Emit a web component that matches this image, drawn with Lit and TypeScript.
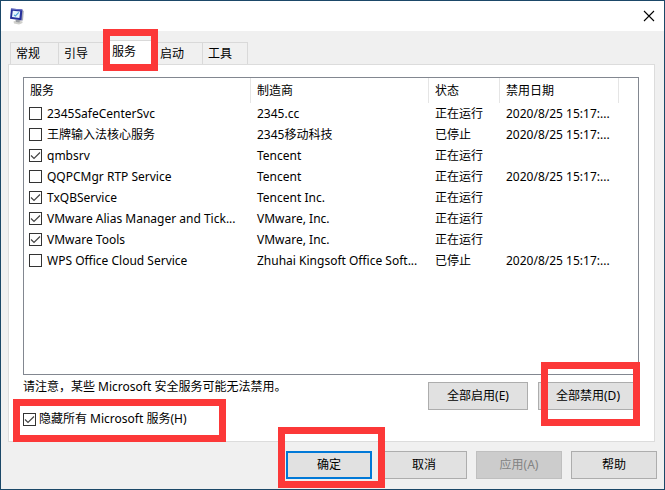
import { LitElement, html, css, nothing, svg } from "lit";
import { customElement, property, state } from "lit/decorators.js";
import { classMap } from "lit/directives/class-map.js";

interface Service {
  name: string;
  vendor: string;
  running: boolean;
  disabledOn?: string;
  enabled: boolean;
}

const DATE = "2020/8/25 15:17:...";

const SERVICES: Service[] = [
  { name: "2345SafeCenterSvc", vendor: "2345.cc", running: true, disabledOn: DATE, enabled: false },
  { name: "王牌输入法核心服务", vendor: "2345移动科技", running: false, disabledOn: DATE, enabled: false },
  { name: "qmbsrv", vendor: "Tencent", running: true, enabled: true },
  { name: "QQPCMgr RTP Service", vendor: "Tencent", running: true, disabledOn: DATE, enabled: false },
  { name: "TxQBService", vendor: "Tencent Inc.", running: true, enabled: true },
  { name: "VMware Alias Manager and Tick...", vendor: "VMware, Inc.", running: true, enabled: true },
  { name: "VMware Tools", vendor: "VMware, Inc.", running: true, enabled: true },
  { name: "WPS Office Cloud Service", vendor: "Zhuhai Kingsoft Office Soft...", running: false, disabledOn: DATE, enabled: false },
];

const TABS = ["常规", "引导", "服务", "启动", "工具"];

// Tick box with the flat Windows 10 look, drawn over a real input.
@customElement("check-box")
class CheckBox extends LitElement {
  @property({ type: Boolean }) checked = false;
  @property() label = "";
  @property({ type: Boolean }) tight = false;

  static styles = css`
    :host { display: block; }
    .label { display: flex; align-items: center; gap: 5px; }
    .tight { gap: 3px; }
    .box { display: grid; flex: none; width: 13px; height: 13px; }
    .input, .tick { grid-area: 1 / 1; }
    .input {
      appearance: none;
      box-sizing: border-box;
      width: 13px;
      height: 13px;
      margin: 0;
      border: 1px solid #333;
      background: #fff;
    }
    .tick { display: none; pointer-events: none; }
    .input:checked + .tick { display: block; }
    .text { white-space: nowrap; }
  `;

  render() {
    return html`<label class=${classMap({ label: true, tight: this.tight })}>
      <span class="box">
        <input class="input" type="checkbox" .checked=${this.checked} />
        <svg class="tick" width="13" height="13" viewBox="0 0 13 13" aria-hidden="true">
          <path d="M2 6.5 L5 9.5 L11 3.5" fill="none" stroke="#444" stroke-width="1.2" />
        </svg>
      </span>
      <span class="text">${this.label}</span>
    </label>`;
  }
}

const monitorIcon = svg`
  <path d="M3.5 13.5 L7 12 L12.5 13.5 L12.5 15 L9 16.5 L4 15.5 Z" fill="#d0d0cc" />
  <path d="M5.5 11.5 L10 12 L9.5 14.5 L6 14 Z" fill="#9a9da2" />
  <path d="M11.5 1.8 L13.8 3 L13 12.4 L10 12.8 Z" fill="#a9abb8" />
  <path d="M1 0.6 L12.4 1.6 L11.4 12.2 L0 10.8 Z" fill="#26309c" />
  <path d="M1 0.6 L12.4 1.6 L12.3 2.6 L1 1.6 Z" fill="#6a72c5" />
  <path d="M2.8 2.8 L10.2 3.5 L9.4 10 L2 9.1 Z" fill="#e6f5fd" />
  <path d="M4 6.8 L5.4 8 L8.8 4.4" fill="none" stroke="#4aa0d8" stroke-width="1.1" />
`;

@customElement("app-root")
class AppRoot extends LitElement {
  @state() private active = 2;

  static styles = css`
    :host {
      display: block;
      font: 12px/20px "Noto Sans", "Noto Sans CJK SC", sans-serif;
      color: #000;
    }
    .window {
      box-sizing: border-box;
      display: flex;
      flex-direction: column;
      min-height: 100vh;
      border: 1px solid #1b4868;
      background: #f0f0f0;
    }
    .titlebar {
      display: flex;
      justify-content: space-between;
      align-items: center;
      height: 30px;
      padding: 0 9px;
      background: #fff;
    }
    .icon { display: block; }
    .close { padding: 0; border: 0; background: none; }

    .body {
      display: flex;
      flex: 1;
      flex-direction: column;
      padding: 9px 9px 0 7px;
    }
    .tabs {
      display: grid;
      grid-template-columns: repeat(4, 48px) 46px;
      align-items: end;
      padding-left: 2px;
    }
    .tab {
      box-sizing: border-box;
      display: block;
      width: 100%;
      height: 22px;
      padding: 0 0 0 5px;
      border: 1px solid #d9d9d9;
      border-width: 1px 0 0 1px;
      background: #f0f0f0;
      color: #000;
      font: inherit;
      text-align: left;
    }
    .tab-slot:last-child .tab { border-right-width: 1px; }
    .tab.active { height: 24px; padding-bottom: 2px; background: #fff; }
    .panel {
      display: flex;
      flex: 1;
      flex-direction: column;
      padding: 12px 15px 12px 14px;
      border: 1px solid #dcdcdc;
      background: #fff;
    }

    .list { flex: 1; border: 1px solid #828790; padding-right: 19px; }
    .table { width: 100%; border-collapse: separate; border-spacing: 0; table-layout: fixed; }
    .vendor { width: 178px; }
    .state { width: 71px; }
    .date { width: 119px; }
    .head, .cell { box-sizing: border-box; padding: 0 0 0 6px; font-weight: normal; text-align: left; white-space: nowrap; }
    .head { height: 25px; border-right: 1px solid #e5e5e5; }
    .cell { height: 21px; }
    .cell.first { padding-left: 5px; }

    .below { display: flex; justify-content: space-between; padding: 2px 1px 0 0; }
    .notes { display: flex; flex-direction: column; align-items: flex-start; gap: 12px; }
    .note { margin: 0; }
    .bulk { display: flex; align-items: flex-start; gap: 10px; padding-top: 5px; }
    .footer {
      display: flex;
      justify-content: flex-end;
      gap: 9px;
      padding: 9px 7px 10px;
    }
    .button {
      box-sizing: border-box;
      display: block;
      width: 86px;
      height: 28px;
      padding: 0;
      border: 1px solid #adadad;
      background: #e1e1e1;
      color: #000;
      font: inherit;
    }
    .button.wide { width: 100px; }
    .button.primary { border: 2px solid #0078d7; }
    .button:disabled { border-color: #bfbfbf; background: #ccc; color: #838383; }

    /* Red frames that point out the controls to use. */
    .spot { position: relative; }
    .mark {
      position: absolute;
      z-index: 1;
      border: 7px solid #fc3838;
      pointer-events: none;
    }
    .mark.on-tab { inset: -11px -4px -7px -3px; }
    .mark.on-check { inset: -10px -39px -13px -10px; }
    .mark.on-bulk { inset: -20px -2px -16px 3px; }
    .mark.on-ok { inset: -24px -13px -9px -8px; }
  `;

  private renderRow(s: Service) {
    return html`<tr>
      <td class="cell first"><check-box .label=${s.name} .checked=${s.enabled}></check-box></td>
      <td class="cell">${s.vendor}</td>
      <td class="cell">${s.running ? "正在运行" : "已停止"}</td>
      <td class="cell">${s.disabledOn ?? nothing}</td>
    </tr>`;
  }

  render() {
    return html`<main class="window">
      <header class="titlebar">
        <svg class="icon" width="14" height="17" viewBox="0 0 14 17" aria-hidden="true">${monitorIcon}</svg>
        <button class="close" aria-label="关闭">
          <svg class="icon" width="12" height="12" viewBox="0 0 12 12">
            <path d="M1 1 L11 11 M11 1 L1 11" stroke="#000" stroke-width="1.1" />
          </svg>
        </button>
      </header>
      <section class="body">
        <div class="tabs" role="tablist">
          ${TABS.map(
            (t, i) => html`<div class="tab-slot spot">
              <button
                class=${classMap({ tab: true, active: i === this.active })}
                role="tab"
                aria-selected=${i === this.active}
                @click=${() => (this.active = i)}
              >${t}</button>
              ${i === 2 ? html`<span class="mark on-tab"></span>` : nothing}
            </div>`
          )}
        </div>
        <div class="panel" role="tabpanel">
          <div class="list">
            <table class="table">
              <thead>
                <tr>
                  <th class="head">服务</th>
                  <th class="head vendor">制造商</th>
                  <th class="head state">状态</th>
                  <th class="head date">禁用日期</th>
                </tr>
              </thead>
              <tbody>${SERVICES.map((s) => this.renderRow(s))}</tbody>
            </table>
          </div>
          <div class="below">
            <div class="notes">
              <p class="note">请注意，某些 Microsoft 安全服务可能无法禁用。</p>
              <div class="spot">
                <check-box tight checked .label=${"隐藏所有 Microsoft 服务(H)"}></check-box>
                <span class="mark on-check"></span>
              </div>
            </div>
            <div class="bulk">
              <button class="button wide">全部启用(E)</button>
              <div class="spot"><button class="button wide">全部禁用(D)</button><span class="mark on-bulk"></span></div>
            </div>
          </div>
        </div>
      </section>
      <footer class="footer">
        <div class="spot"><button class="button primary">确定</button><span class="mark on-ok"></span></div>
        <button class="button">取消</button>
        <button class="button" disabled>应用(A)</button>
        <button class="button">帮助</button>
      </footer>
    </main>`;
  }
}
